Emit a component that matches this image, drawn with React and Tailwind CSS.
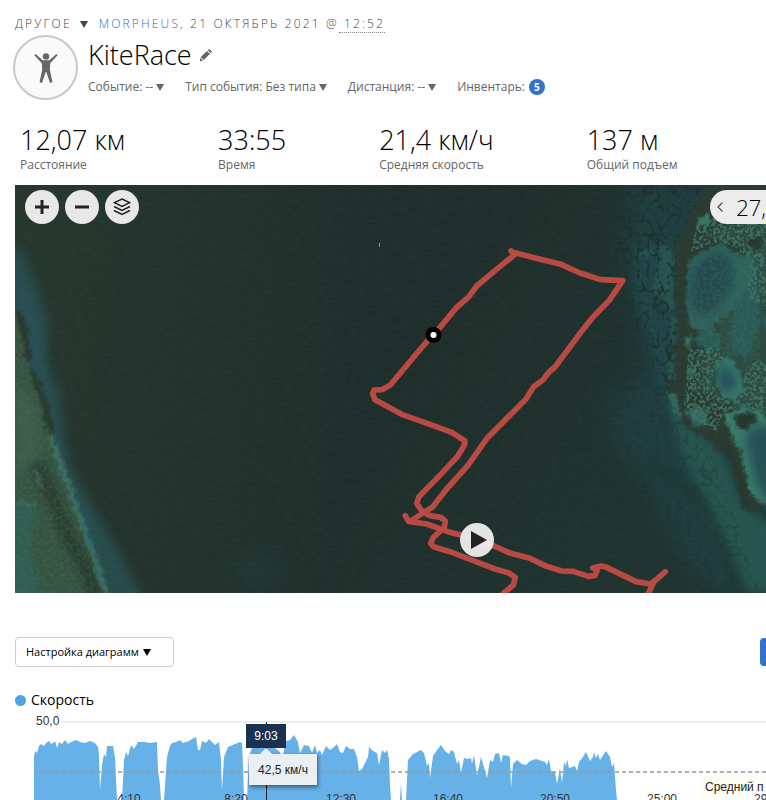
import React from "react";
import { ChevronLeft } from "lucide-react";

function Caret({ className = "" }) {
  return (
    <svg viewBox="0 0 8 7" className={`inline-block h-[7px] w-2 ${className}`} fill="currentColor" aria-hidden="true">
      <path d="M0 0H8L4 7Z" />
    </svg>
  );
}

const stats = [
  ["12,07 км", "Расстояние"],
  ["33:55", "Время"],
  ["21,4 км/ч", "Средняя скорость"],
  ["137 м", "Общий подъем"],
];

const filters = ["Событие: --", "Тип события: Без типа", "Дистанция: --"];

function MapPicture() {
  return (
    <svg className="block h-full w-full" viewBox="15 185 751 408" preserveAspectRatio="xMinYMin slice" role="img" aria-label="Карта">
      <defs>
        <linearGradient id="sea" x1="0" y1="0" x2="1" y2="0.3">
          <stop offset="0" stopColor="#21342e" />
          <stop offset="0.3" stopColor="#202f2c" />
          <stop offset="0.6" stopColor="#1f2e2b" />
          <stop offset="1" stopColor="#20332f" />
        </linearGradient>
        <linearGradient id="depth" x1="0" y1="0" x2="1" y2="0">
          <stop offset="0" stopColor="#28382e" stopOpacity="0.8" />
          <stop offset="1" stopColor="#28382e" stopOpacity="0" />
        </linearGradient>
        <filter id="soft" x="-30%" y="-30%" width="160%" height="160%" colorInterpolationFilters="sRGB"><feGaussianBlur stdDeviation="14" /></filter>
        <filter id="softer" x="-60%" y="-60%" width="220%" height="220%" colorInterpolationFilters="sRGB"><feGaussianBlur stdDeviation="36" /></filter>
        <filter id="rough" x="-10%" y="-10%" width="120%" height="120%" colorInterpolationFilters="sRGB">
          <feTurbulence type="fractalNoise" baseFrequency="0.05" numOctaves="3" seed="4" result="n" />
          <feGaussianBlur in="SourceGraphic" stdDeviation="4" result="b" />
          <feDisplacementMap in="b" in2="n" scale="26" xChannelSelector="R" yChannelSelector="G" />
        </filter>
        <filter id="speckle" x="0" y="0" width="100%" height="100%" colorInterpolationFilters="sRGB">
          <feTurbulence type="fractalNoise" baseFrequency="0.1" numOctaves="4" seed="8" result="n" />
          <feColorMatrix in="n" type="matrix" values="0 0 0 0 0.25  0 0 0 0 0.45  0 0 0 0 0.4  0 8 0 0 -3.7" result="s" />
          <feComposite in="s" in2="SourceGraphic" operator="in" />
        </filter>
        <filter id="veins" x="0" y="0" width="100%" height="100%" colorInterpolationFilters="sRGB">
          <feTurbulence type="turbulence" baseFrequency="0.034 0.024" numOctaves="2" seed="12" result="n" />
          <feColorMatrix in="n" type="matrix" values="0 0 0 0 0.12  0 0 0 0 0.19  0 0 0 0 0.17  -8 0 0 0 1.5" result="s" />
          <feComposite in="s" in2="SourceGraphic" operator="in" />
        </filter>
        <filter id="grain" x="0" y="0" width="100%" height="100%" colorInterpolationFilters="sRGB">
          <feTurbulence type="fractalNoise" baseFrequency="0.12 0.35" numOctaves="2" seed="2" />
          <feColorMatrix type="matrix" values="0 0 0 0 0.3  0 0 0 0 0.45  0 0 0 0 0.4  0 0.5 0 0 -0.2" />
        </filter>
      </defs>
      <rect x="15" y="185" width="751" height="408" fill="url(#sea)" />
      <rect x="15" y="185" width="330" height="408" fill="url(#depth)" />

      {/* western shore */}
      <g transform="translate(0 180) scale(0.33333)">
        <path filter="url(#soft)" fill="#284b4b" d="M20 190L70 220L110 320L145 420L138 540L180 640L190 760L210 860L290 1000L360 1120L430 1260L20 1300Z" />
        <path filter="url(#soft)" fill="#2a5058" d="M40 260L85 330L120 460L140 640L170 780L220 930L320 1110L350 1250L280 1250L170 900L80 560Z" opacity="0.9" />
        <path filter="url(#rough)" fill="#37533f" d="M30 370L75 440L88 540L136 670L166 790L206 900L256 1060L316 1260L30 1270Z" />
        <path filter="url(#soft)" fill="#2f5f52" d="M30 950L110 980L85 1090L125 1270L30 1270Z" />
        <path filter="url(#soft)" fill="#456050" opacity="0.7" d="M45 600L100 660L130 800L60 900L45 850Z" />
        <path filter="url(#rough)" fill="none" stroke="#25352b" strokeWidth="22" opacity="0.8" d="M54 395L78 470L84 540M94 570L131 660L154 760" />
        <path filter="url(#soft)" fill="none" stroke="#27382c" strokeWidth="44" opacity="0.9" d="M110 850L170 980L210 1080L250 1150L290 1260" />
        <path filter="url(#rough)" fill="none" stroke="#3d7568" strokeWidth="18" opacity="0.8" d="M150 770L200 900L245 1030L285 1140L325 1260" />
        <path filter="url(#rough)" fill="none" stroke="#294b3f" strokeWidth="11" d="M280 1040L315 1140L345 1260" />
        <path filter="url(#rough)" fill="none" stroke="#3f7064" strokeWidth="9" d="M105 870L125 920M50 965L105 975" />
        <path filter="url(#speckle)" opacity="0.25" d="M45 390L80 540L160 790L290 1240L45 1240Z" />
        <ellipse filter="url(#softer)" cx="770" cy="1170" rx="80" ry="50" fill="#22403f" opacity="0.6" />
      </g>

      {/* eastern reef */}
      <g transform="translate(560 180) scale(0.33333)">
        <path filter="url(#softer)" fill="#1f3d40" d="M200 0H620V1240H450L360 1120L250 900L160 780L150 640L260 600L230 400L190 250Z" />
        <path filter="url(#soft)" fill="#21484c" opacity="0.8" d="M230 180L340 190V640L300 620L270 480L220 330Z" />
        <path filter="url(#soft)" fill="#26544f" d="M310 640L400 740L480 800L540 960L640 1040V1240H560L450 1010L370 830Z" />
        <path filter="url(#soft)" fill="none" stroke="#1f3633" strokeWidth="26" d="M280 850L420 960L500 1120L540 1240" opacity="0.8" />
        <path filter="url(#rough)" fill="#2a3b31" d="M450 0H640V960L570 1000L500 830L370 730L316 600L350 430L346 210L400 90Z" />
        <path filter="url(#soft)" fill="#2d4c41" d="M420 160L640 110V700L520 680L410 620L430 500L500 400L560 200Z" />
        <g filter="url(#rough)">
          <path fill="#2e635c" d="M385 250L420 215L485 190L530 220L590 235L570 335L510 395L440 455L390 445L378 360Z" />
          <path fill="#2a5a56" d="M405 465L445 445L480 460L485 495L445 520L415 495ZM530 370L590 280L600 430L560 540L510 505L515 430ZM610 400L640 380V480L612 450Z" />
          <path fill="#36776b" d="M475 550L505 525L545 585L550 640L510 660L465 620Z" />
          <path fill="#3a7a6c" d="M490 705L540 680L600 690L640 740V1000L570 940L540 810L515 770Z" />
          <path fill="#27524f" d="M305 190L340 215L342 390L325 380L275 330L290 290ZM325 420L350 400L350 480L330 500ZM322 530L344 520L346 600L322 590ZM230 220L265 200L290 225L255 235Z" />
          <path fill="#3a7769" d="M372 470L392 465L392 500L376 500ZM405 125L445 95L462 130L420 138ZM392 560L406 565L404 590L392 584Z" />
          <path fill="#34685d" d="M375 690L430 680L450 730L400 740ZM320 640L342 640L366 710L350 715Z" />
        </g>
        <g filter="url(#soft)">
          <path fill="#23494e" d="M392 275L435 225L495 218L520 255L515 325L475 385L430 415L390 380Z" />
          <path fill="#24505a" d="M475 580L500 555L525 590L530 620L500 640L470 610Z" />
          <path fill="#265056" d="M555 770L590 735L640 740V1000L585 900Z" />
        </g>
        <path filter="url(#speckle)" opacity="0.85" d="M410 130L620 60V380L560 350L575 240L530 205L480 185L390 215ZM385 510L470 500L500 525L450 600L475 650L540 650L560 560L600 540L620 560V700L540 675L490 700L470 760L370 700Z" />
        <path filter="url(#speckle)" opacity="0.25" d="M380 240L600 200V560L500 520L390 490Z" />
        <path filter="url(#rough)" fill="#25372f" d="M520 705L580 695L590 725L550 755L530 735ZM562 180L602 175L615 200L582 215ZM480 780L515 800L535 860L570 970L550 990L530 890Z" />
        <path filter="url(#veins)" opacity="0.9" d="M170 15H440L350 190V620L330 640L250 500L160 330Z" />
        <path filter="url(#veins)" opacity="0.35" d="M160 620H340L450 800L600 1240H420L180 800Z" />
      </g>
      <rect x="15" y="185" width="751" height="408" filter="url(#grain)" opacity="0.35" />
      <path d="M379.500 243V247" stroke="#7f9089" />

      {/* recorded track */}
      <g transform="translate(350 230) scale(0.33333)" fill="none" stroke="#b94a43" strokeWidth="17" strokeLinecap="round" strokeLinejoin="round">
        <path d="M483 63L495 73L435 122L380 168L357 200L318 234L272 290L224 342L121 465L96 479L72 480L68 490L75 509L155 553L240 583L305 607L345 633L343 646L323 679L275 730L207 800L200 820L217 845L240 857L272 862L286 873L283 893L250 922L242 940L250 950L300 965L370 992L435 1017L475 1028L496 1042L490 1065L460 1090" />
        <path d="M495 68L555 84L633 103L690 129L752 149L818 152L778 211L730 260L690 310L615 411L597 426L579 450L551 470L528 507L411 625L353 707L290 777L247 832L228 843L187 870M166 857L176 874L230 882L300 907L370 925L432 948L482 970L540 985L590 1009L635 1023L670 1024L715 1039L735 1036L742 1020L728 1014L753 1008L770 1012L858 1055L900 1062L920 1048L946 1025M910 1060L895 1090" />
      </g>
      <circle cx="433.500" cy="335" r="8" fill="black" />
      <circle cx="433.500" cy="335" r="3" fill="white" />
    </svg>
  );
}

const speed = [
  [34, 800], [34, 757], [35, 751], [37, 753], [39, 746], [41, 744], [44, 746], [46, 743], [49, 741], [51, 744], [53, 743], [55, 741], [57, 748], [59, 742], [62, 744], [65, 740], [68, 744], [71, 742], [76, 740], [80, 742], [85, 743], [90, 741], [95, 743], [98, 747], [99, 755], [100, 790], [102, 765], [104, 754], [106, 757], [107, 746], [113, 746], [115, 757], [117, 800],
  [122, 800], [124, 760], [126, 752], [128, 756], [131, 745], [134, 749], [138, 742], [145, 742], [150, 743], [157, 742], [158, 770], [160, 785], [161, 800], [164, 800], [167, 757], [170, 746], [172, 743], [176, 742], [180, 740], [183, 743], [189, 741], [192, 739], [196, 737], [198, 750], [200, 750], [202, 741], [206, 743], [209, 739], [212, 742], [215, 745], [219, 742], [221, 760], [222, 790], [224, 757], [228, 747], [235, 744], [240, 742], [242, 743], [243, 765], [244, 800],
  [247, 800], [249, 756], [252, 748], [260, 744], [270, 744], [280, 752], [282, 760], [284, 750], [286, 741], [290, 740], [294, 735], [298, 742], [300, 753], [304, 745], [309, 746], [312, 753], [315, 745], [317, 753], [320, 750], [322, 755], [326, 746], [330, 750], [333, 748], [337, 744], [340, 752], [343, 753], [346, 746], [350, 749], [354, 749], [357, 757], [359, 771], [362, 769], [368, 757], [369, 747], [373, 751], [377, 753], [379, 765], [382, 750], [385, 753], [387, 750], [389, 759], [390, 785], [391, 800],
  [400, 800], [401, 782], [402, 800], [406, 800], [408, 760], [413, 754], [417, 752], [421, 750], [424, 753], [427, 766], [429, 763], [430, 778], [433, 756], [437, 750], [441, 745], [445, 751], [449, 754], [451, 750], [454, 752], [457, 764], [459, 760], [461, 773], [464, 758], [468, 759], [471, 758], [472, 764], [474, 755], [477, 776], [481, 757], [484, 767], [487, 778], [490, 760], [493, 762], [495, 754], [499, 753], [501, 763], [503, 755], [509, 756], [510, 758], [511, 788], [513, 764], [517, 760], [522, 764], [526, 765], [530, 761], [536, 759], [545, 762], [547, 765], [549, 759], [551, 771], [555, 772], [557, 784], [559, 774], [560, 768], [562, 783], [564, 762], [566, 766], [567, 759], [569, 768], [575, 766], [577, 771], [579, 762], [583, 757], [586, 752], [590, 761], [593, 757], [594, 752], [596, 758], [598, 754], [600, 760], [604, 754], [606, 751], [610, 757], [612, 767], [614, 763], [616, 790], [617, 800],
];

const ticks = ["4:10", "8:20", "12:30", "16:40", "20:50", "25:00"];

function SpeedChart() {
  return (
    <svg className="block h-[90px] w-full text-[12px]" viewBox="15 710 751 90" preserveAspectRatio="xMinYMin slice" role="img" aria-label="Скорость" fontFamily="Liberation Sans, sans-serif">
      <path d="M62 722H766" stroke="#ececec" strokeWidth="2" />
      <text x="36" y="725" fill="#333">50,0</text>
      <polygon points={speed.map((p) => p.join(",")).join(" ")} fill="#67b1e9" />
      <path d="M34 772H766" stroke="#999" strokeWidth="1.500" strokeDasharray="4 3" />
      <rect x="700" y="776" width="66" height="20" fill="#fdfdf3" />
      <text x="705" y="791" fill="#222">Средний п</text>
      {ticks.map((t, i) => (
        <text key={t} x={129 + i * 107 - (i > 1 ? 2 : 0)} y="803" textAnchor="middle" fill="#333">{t}</text>
      ))}
      <text x="754" y="803" fill="#333">29</text>
      <path d="M266.500 722V800" stroke="#222" />
    </svg>
  );
}

const round = "flex size-[34px] items-center justify-center rounded-full bg-[#e8e8e8] text-[#222]";

export default function App() {
  return (
    <main className="h-screen overflow-hidden bg-white font-['Open_Sans',sans-serif] text-black">
      <header className="pt-[14px]">
        <div className="flex items-center pl-[15px] text-[12px] leading-5 font-light tracking-[0.18em] text-[#444]">
          <button type="button" className="flex items-center gap-2 tracking-[0.18em]">ДРУГОЕ <Caret /></button>
          <p className="ml-[11px] whitespace-nowrap">
            <a href="#morpheus" className="text-[#2f68c4]">MORPHEUS</a>, 21 ОКТЯБРЬ 2021 @
            <span className="border-b border-dotted border-[#888]"> 12:52</span>
          </p>
        </div>
        <div className="flex pl-[13px]">
          <div className="mt-px flex size-[65px] shrink-0 items-center justify-center rounded-full border-2 border-[#c8c8c8] bg-[#fafafa]">
            <svg viewBox="0 0 24 32" className="h-8 w-6" fill="#666" aria-hidden="true">
              <circle cx="12" cy="4.500" r="3.200" />
              <path d="M.4 3.200L1.600 2 8.600 8.200H15.400L22.400 2 23.600 3.200 16.200 11.200 15.800 17.500 18.400 30.200 16 31 12.300 20H11.700L8 31 5.600 30.200 8.200 17.500 7.800 11.200Z" />
            </svg>
          </div>
          <div className="ml-[10px]">
            <div className="flex h-[42px] items-center gap-[7px]">
              <h1 className="text-[27px] leading-10 font-light">KiteRace</h1>
              <button type="button" aria-label="Изменить название">
                <svg viewBox="0 0 14 14" className="size-[14px]" fill="#666" aria-hidden="true">
                  <path d="M10 1L13 3.600 11.700 5 8.800 2.300ZM8 3L11 5.800 4.800 12 1.600 9.300ZM1.200 10L4 12.500.8 13.400Z" />
                </svg>
              </button>
            </div>
            <div className="mt-px flex items-center gap-[21px] text-[12px] leading-5 whitespace-nowrap text-[#666]">
              {filters.map((f) => (
                <button type="button" key={f} className="flex items-center gap-[3px]">{f} <Caret /></button>
              ))}
              <button type="button" className="flex items-center gap-1">
                Инвентарь:
                <span className="flex size-4 items-center justify-center rounded-full bg-[#3470cc] text-[10px] leading-4 font-bold text-white">5</span>
              </button>
            </div>
          </div>
        </div>
      </header>

      <dl className="mt-6 flex gap-[93px] pl-5 whitespace-nowrap">
        {stats.map(([value, label]) => (
          <div key={label} className="flex flex-col-reverse">
            <dt className="text-[12px] leading-[18px] text-[#666]">{label}</dt>
            <dd className="text-[27px] leading-8 font-light">{value}</dd>
          </div>
        ))}
      </dl>

      <section className="relative mt-[11px] ml-[15px] h-[408px] overflow-hidden bg-[#20302c]">
        <MapPicture />
        <div className="absolute top-[5px] left-[10px] flex gap-[6px]">
          <button type="button" aria-label="Увеличить" className={round}>
            <svg viewBox="0 0 14 14" className="size-[14px]" stroke="currentColor" strokeWidth="3"><path d="M7 0V14M0 7H14" /></svg>
          </button>
          <button type="button" aria-label="Уменьшить" className={round}>
            <svg viewBox="0 0 14 14" className="size-[14px]" stroke="currentColor" strokeWidth="3"><path d="M0 7H14" /></svg>
          </button>
          <button type="button" aria-label="Слои" className={round}>
            <svg viewBox="0 0 18 18" className="size-[18px]" fill="none" stroke="currentColor" strokeWidth="1.500"><path d="M9 1L16.500 4.700 9 8.500 1.500 4.700ZM1 8.500L9 12.500 17 8.500M1 12.500L9 16.500 17 12.500" /></svg>
          </button>
        </div>
        <button type="button" className="absolute top-[5px] right-0 flex h-[34px] w-14 items-center justify-between rounded-l-full bg-[#ececec] pl-[2px] text-[22px] leading-8 font-light">
          <ChevronLeft className="size-[16px] shrink-0 text-[#555]" />27,
        </button>
        <button type="button" aria-label="Воспроизвести" className="absolute top-[338px] left-[445px] flex size-[34px] items-center justify-center rounded-full bg-[#f0eeee]/95">
          <svg viewBox="0 0 16 18" className="ml-1 h-[18px] w-4" fill="#222"><path d="M0 0L16 9 0 18Z" /></svg>
        </button>
      </section>

      <div className="mt-[44px] flex items-center justify-between pl-[15px]">
        <button type="button" className="flex h-[30px] w-[159px] items-center gap-1 rounded-[4px] border border-[#ccc] pl-[10px] text-[11px] whitespace-nowrap">
          Настройка диаграмм <Caret />
        </button>
        <button type="button" aria-label="Действие" className="h-7 w-[6px] rounded-l-[4px] bg-[#3470cc]" />
      </div>

      <section className="mt-[23px] pl-[15px]">
        <h2 className="flex h-5 items-center gap-[5px] text-[14px] leading-5">
          <span className="size-[11px] rounded-full bg-[#4da3e8]" />Скорость
        </h2>
        <div className="relative font-['Liberation_Sans',sans-serif] text-[12px]">
          <SpeedChart />
          <div className="absolute top-[14px] left-[231px] flex h-6 w-10 items-center justify-center bg-[#1a3250] font-medium text-white">9:03</div>
          <div className="absolute top-[44px] left-[234px] flex h-[31px] w-[68px] items-center justify-center bg-[#eaeff3] text-[#222] shadow-[1px_2px_4px_rgba(0,0,0,0.5)]">
            42,5 км/ч
            <svg viewBox="0 0 12 6" className="absolute -top-[6px] left-[11px] h-[6px] w-3" fill="#eaeff3"><path d="M6 0L12 6H0Z" /></svg>
          </div>
        </div>
      </section>
    </main>
  );
}
